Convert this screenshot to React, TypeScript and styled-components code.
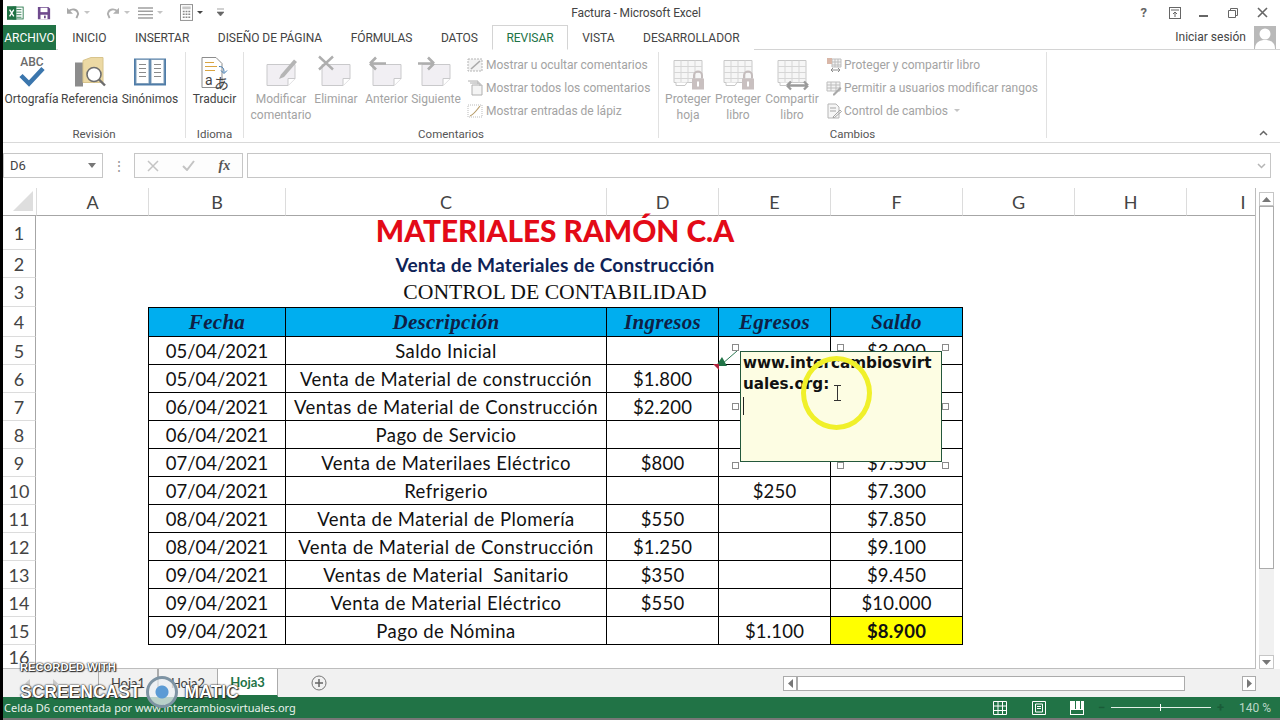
import React from 'react';
import styled, { createGlobalStyle } from 'styled-components';

const GlobalStyle = createGlobalStyle`
  html, body { margin: 0; padding: 0; background: #fff; }
  * { box-sizing: border-box; }
`;

const UI_FONT = `Roboto, "Noto Sans", sans-serif`;
const CELL_FONT = `Lato, "Open Sans", sans-serif`;

const COLUMNS = [
  { name: 'A', width: 112 },
  { name: 'B', width: 137 },
  { name: 'C', width: 321 },
  { name: 'D', width: 112 },
  { name: 'E', width: 112 },
  { name: 'F', width: 132 },
  { name: 'G', width: 112 },
  { name: 'H', width: 112 },
  { name: 'I', width: 113 },
];

// las celdas tapadas por el comentario quedan vacias
const TABLE_ROWS = [
  ['05/04/2021', 'Saldo Inicial', '', '', '$3.000'],
  ['05/04/2021', 'Venta de Material de construcción', '$1.800', '', ''],
  ['06/04/2021', 'Ventas de Material de Construcción', '$2.200', '', ''],
  ['06/04/2021', 'Pago de Servicio', '', '', ''],
  ['07/04/2021', 'Venta de Materilaes Eléctrico', '$800', '', '$7.550'],
  ['07/04/2021', 'Refrigerio', '', '$250', '$7.300'],
  ['08/04/2021', 'Venta de Material de Plomería', '$550', '', '$7.850'],
  ['08/04/2021', 'Venta de Material de Construcción', '$1.250', '', '$9.100'],
  ['09/04/2021', 'Ventas de Material  Sanitario', '$350', '', '$9.450'],
  ['09/04/2021', 'Venta de Material Eléctrico', '$550', '', '$10.000'],
  ['09/04/2021', 'Pago de Nómina', '', '$1.100', '$8.900'],
];

const HANDLES = [
  [735, 347], [840, 347], [945, 347],
  [735, 406], [945, 406],
  [735, 465], [840, 465], [945, 465],
];

// iconos de la cinta
function NoteIcon({ children }: { children?: React.ReactNode }) {
  return (
    <svg width="40" height="36" viewBox="0 0 40 36">
      <path d="M6 10h28v14l-7 7H6z" fill="#f1eff3" stroke="#c9c9cb" />
      <path d="M27 31v-7h7" fill="#fff" stroke="#c9c9cb" />
      {children}
    </svg>
  );
}

function SheetIcon({ lock, share }: { lock?: boolean; share?: boolean }) {
  return (
    <svg width="36" height="36" viewBox="0 0 36 36">
      <path d="M4 6h28v22H4z" fill="#f6f6f6" stroke="#c8c8c8" />
      <path d="M4 12h28M4 18h28M4 24h28M11 6v22M18 6v22M25 6v22" stroke="#d6d6d6" />
      <path d="M6 28v3h9l2-3" fill="#fff" stroke="#c8c8c8" />
      {lock && (
        <g>
          <path d="M24 24v-3a4 4 0 0 1 8 0v3" fill="none" stroke="#c4bcbc" strokeWidth="2" />
          <rect x="22" y="24" width="12" height="11" fill="#c9c0c0" />
          <rect x="27" y="27" width="2" height="5" fill="#fff" />
        </g>
      )}
      {share && <path d="M13 31h21M13 31l4-4M13 31l4 4M34 31l-4-4M34 31l-4 4" stroke="#9a9a9a" strokeWidth="2.4" fill="none" />}
    </svg>
  );
}

function SmallIcon({ kind }: { kind: string }) {
  return (
    <svg width="16" height="16" viewBox="0 0 16 16">
      {kind === 'dash' && <path d="M1 2h14v12H1z" fill="#f2f2f2" stroke="#b5b5b5" strokeDasharray="2 1" />}
      {kind === 'dash' && <path d="M4 12L13 4" stroke="#aaa" strokeWidth="1.6" />}
      {kind === 'stack' && <path d="M1 1h10v3M3 3h10v3M5 5h10v10H5z" fill="#f4f4f4" stroke="#b0b0b0" />}
      {kind === 'pencil' && <path d="M1 2h14v12H1z" fill="none" stroke="#bbb" strokeDasharray="1 1" />}
      {kind === 'pencil' && <path d="M3 13C6 12 10 7 13 3" stroke="#b79c6a" strokeWidth="1.2" fill="none" />}
      {kind === 'shareLock' && <path d="M6 2h9v8H6zM6 5h9M6 8h9M9 2v8M12 2v8" fill="#f4f4f4" stroke="#bdbdbd" />}
      {kind === 'shareLock' && <rect x="1" y="1" width="5" height="6" fill="#d9b7a8" />}
      {kind === 'shareLock' && <path d="M5 13h9M5 13l2-2M5 13l2 2M14 13l-2-2M14 13l-2 2" stroke="#8c8c8c" fill="none" />}
      {kind === 'range' && <path d="M1 2h13v9H1zM1 5h13M1 8h13M5 2v9M10 2v9" fill="#f4f4f4" stroke="#bdbdbd" />}
      {kind === 'range' && <path d="M7 14l7-7 1.5 1.5-7 7H7z" fill="#a9a9a9" />}
      {kind === 'track' && <path d="M2 1h8l3 3v11H2z" fill="#f6f6f6" stroke="#b5b5b5" />}
      {kind === 'track' && <path d="M4 5h6M4 8h6M7 14l7-7 1.5 1.5-7 6H7z" stroke="#a5a5a5" fill="none" />}
    </svg>
  );
}

export default function App() {
  return (
    <Page>
      <GlobalStyle />

      <TitleBar>
        <QuickAccess>
          <BarIcon $gap={0}>
            <svg width="17" height="16" viewBox="0 0 20 18">
              <rect x="7" y="2" width="12" height="14" fill="#fff" stroke="#1f7244" />
              <path d="M11 5h6M11 8h6M11 11h6M11 14h6" stroke="#1f7244" />
              <rect x="0" y="1" width="11" height="16" fill="#1f7244" />
              <path d="M3 5l5 8M8 5l-5 8" stroke="#fff" strokeWidth="1.6" />
            </svg>
          </BarIcon>
          <BarIcon $gap={13}>
            <svg width="14" height="14" viewBox="0 0 16 16">
              <path d="M1 1h12l2 2v12H1z" fill="#6f4a8e" />
              <rect x="4" y="2" width="8" height="5" fill="#fff" />
              <rect x="4" y="10" width="8" height="5" fill="#fff" />
              <rect x="8" y="11" width="2" height="3" fill="#6f4a8e" />
            </svg>
          </BarIcon>
          <BarIcon $gap={15}>
            <svg width="14" height="12" viewBox="0 0 16 14">
              <path d="M2 6c4-5 11-4 12 2l-2 5" fill="none" stroke="#a8a8a8" strokeWidth="2.2" />
              <path d="M1 1v7h7z" fill="#a8a8a8" />
            </svg>
          </BarIcon>
          <Caret $light />
          <BarIcon $gap={16}>
            <svg width="14" height="12" viewBox="0 0 16 14">
              <path d="M14 6C10 1 3 2 2 8l2 5" fill="none" stroke="#b0b0b0" strokeWidth="2.2" />
              <path d="M15 1v7H8z" fill="#b0b0b0" />
            </svg>
          </BarIcon>
          <Caret $light />
          <BarIcon $gap={8}>
            <svg width="15" height="12" viewBox="0 0 15 12">
              <path d="M0 1h15M0 4.300h15M0 7.600h15M0 11h15" stroke="#a0a0a0" strokeWidth="1.4" />
            </svg>
          </BarIcon>
          <Caret $light />
          <BarIcon $gap={17}>
            <svg width="13" height="17" viewBox="0 0 14 18">
              <rect x="0.5" y="0.5" width="13" height="17" fill="#fff" stroke="#8a8a8a" />
              <rect x="2.5" y="2.5" width="9" height="3" fill="#c6c6c6" />
              <path d="M3 8h2M6 8h2M9 8h2M3 11h2M6 11h2M9 11h2M3 14h2M6 14h2M9 14h2" stroke="#8a8a8a" strokeWidth="1.6" />
            </svg>
          </BarIcon>
          <Caret />
          <BarIcon $gap={14}>
            <svg width="7" height="9" viewBox="0 0 7 9">
              <path d="M0 1h7M0 4h7l-3.500 4z" fill="#666" stroke="#666" strokeWidth="0.6" />
            </svg>
          </BarIcon>
        </QuickAccess>
        <WindowTitle>Factura - Microsoft Excel</WindowTitle>
        <WindowControls>
          <HelpMark>?</HelpMark>
          <BarIcon $gap={22}>
            <svg width="12" height="12" viewBox="0 0 12 12">
              <rect x="0.5" y="0.5" width="11" height="11" fill="none" stroke="#666" />
              <path d="M2 3h8M6 10V5M4 7l2-2 2 2" fill="none" stroke="#666" />
            </svg>
          </BarIcon>
          <BarIcon $gap={18}>
            <svg width="10" height="10" viewBox="0 0 10 10">
              <rect x="0" y="7" width="9" height="2" fill="#666" />
            </svg>
          </BarIcon>
          <BarIcon $gap={19}>
            <svg width="10" height="10" viewBox="0 0 10 10">
              <path d="M2.500 2.500V.5h7v7h-2M.5 2.500h7v7h-7z" fill="none" stroke="#666" />
            </svg>
          </BarIcon>
          <BarIcon $gap={19}>
            <svg width="11" height="11" viewBox="0 0 11 11">
              <path d="M1 1l9 9M10 1l-9 9" stroke="#666" strokeWidth="1.6" />
            </svg>
          </BarIcon>
        </WindowControls>
      </TitleBar>

      <TabBar>
        <FileTab>ARCHIVO</FileTab>
        <Tab>INICIO</Tab>
        <Tab>INSERTAR</Tab>
        <Tab>DISEÑO DE PÁGINA</Tab>
        <Tab>FÓRMULAS</Tab>
        <Tab>DATOS</Tab>
        <Tab $active>REVISAR</Tab>
        <Tab>VISTA</Tab>
        <Tab>DESARROLLADOR</Tab>
        <SignIn>Iniciar sesión</SignIn>
        <Avatar>
          <svg width="22" height="23" viewBox="0 0 22 23">
            <rect width="22" height="23" fill="#b9b9b9" />
            <circle cx="11" cy="8" r="5.5" fill="#fff" />
            <path d="M1 23c0-7 5-9 10-9s10 2 10 9z" fill="#fff" />
          </svg>
        </Avatar>
      </TabBar>

      <Ribbon>
        <RibbonGroup $width={183}>
          <GroupBody>
            <LargeButton $width={57}>
              <svg width="36" height="36" viewBox="0 0 36 36">
                <text x="18" y="11" textAnchor="middle" fontFamily="Roboto, sans-serif" fontSize="12" fontWeight="500" fill="#6a6a6a">ABC</text>
                <path d="M7 21l8 8L29 14" fill="none" stroke="#3b76ad" strokeWidth="4.5" />
              </svg>
              Ortografía
            </LargeButton>
            <LargeButton $width={59}>
              <svg width="36" height="36" viewBox="0 0 36 36">
                <rect x="3" y="8" width="8" height="24" fill="#8c8c8c" />
                <path d="M11 6l8-3h12v25H11z" fill="#ecd9a4" stroke="#d8c48c" />
                <circle cx="22" cy="20" r="7" fill="#fff" stroke="#6d6d6d" strokeWidth="1.6" />
                <path d="M27 25l6 6" stroke="#6d6d6d" strokeWidth="2.4" />
              </svg>
              Referencia
            </LargeButton>
            <LargeButton $width={62}>
              <svg width="36" height="36" viewBox="0 0 36 36">
                <path d="M2 4h32v27H2z" fill="#4f7ca8" />
                <path d="M4 5h13v24H4zM19 5h13v24H19z" fill="#fff" stroke="#7f9db9" />
                <path d="M7 10h7M7 14h7M7 18h7M7 22h7M22 10h7M22 14h7M22 18h7M22 22h7" stroke="#8a8a8a" />
              </svg>
              Sinónimos
            </LargeButton>
          </GroupBody>
          <GroupLabel>Revisión</GroupLabel>
        </RibbonGroup>

        <RibbonGroup $width={58}>
          <GroupBody>
            <LargeButton $width={57}>
              <svg width="36" height="36" viewBox="0 0 36 36">
                <path d="M5 3h14l6 6v24H5z" fill="#fff" stroke="#8d8d8d" />
                <path d="M8 8h9M8 12h12M8 16h10" stroke="#d9a441" />
                <text x="8" y="30" fontFamily="Roboto, sans-serif" fontSize="14" fill="#444">a</text>
                <text x="17" y="34" fontFamily="'Noto Sans CJK JP', sans-serif" fontSize="15" fill="#444">あ</text>
                <path d="M22 12c4 0 5 2 5 6M24 16l3 3 3-3" fill="none" stroke="#3b76ad" />
              </svg>
              Traducir
            </LargeButton>
          </GroupBody>
          <GroupLabel>Idioma</GroupLabel>
        </RibbonGroup>

        <RibbonGroup $width={415}>
          <GroupBody $inset={9}>
            <LargeButton $width={56} $disabled>
              <NoteIcon>
                <path d="M20 20l13-15 3 2.500-13 15-5 2z" fill="#b5b5b5" />
              </NoteIcon>
              <span>Modificar<br />comentario</span>
            </LargeButton>
            <LargeButton $width={54} $disabled>
              <NoteIcon>
                <path d="M3 2l14 13M17 2L3 15" stroke="#aeaeae" strokeWidth="2.4" />
              </NoteIcon>
              Eliminar
            </LargeButton>
            <LargeButton $width={47} $disabled>
              <NoteIcon>
                <path d="M3 9h16M3 9l6-6M3 9l6 6" fill="none" stroke="#aeaeae" strokeWidth="2.6" />
              </NoteIcon>
              Anterior
            </LargeButton>
            <LargeButton $width={52} $disabled>
              <NoteIcon>
                <path d="M2 9h16M18 9l-6-6M18 9l-6 6" fill="none" stroke="#aeaeae" strokeWidth="2.6" />
              </NoteIcon>
              Siguiente
            </LargeButton>
            <SmallColumn>
              <SmallRow $left={5}><SmallIcon kind="dash" />Mostrar u ocultar comentarios</SmallRow>
              <SmallRow $left={5}><SmallIcon kind="stack" />Mostrar todos los comentarios</SmallRow>
              <SmallRow $left={5}><SmallIcon kind="pencil" />Mostrar entradas de lápiz</SmallRow>
            </SmallColumn>
          </GroupBody>
          <GroupLabel>Comentarios</GroupLabel>
        </RibbonGroup>

        <RibbonGroup $width={388}>
          <GroupBody $inset={4}>
            <LargeButton $width={50} $disabled>
              <SheetIcon lock />
              <span>Proteger<br />hoja</span>
            </LargeButton>
            <LargeButton $width={50} $disabled>
              <SheetIcon lock />
              <span>Proteger<br />libro</span>
            </LargeButton>
            <LargeButton $width={58} $disabled>
              <SheetIcon share />
              <span>Compartir<br />libro</span>
            </LargeButton>
            <SmallColumn>
              <SmallRow $left={5} $tight><SmallIcon kind="shareLock" />Proteger y compartir libro</SmallRow>
              <SmallRow $left={5} $tight><SmallIcon kind="range" />Permitir a usuarios modificar rangos</SmallRow>
              <SmallRow $left={5} $tight><SmallIcon kind="track" />Control de cambios<Caret $light /></SmallRow>
            </SmallColumn>
          </GroupBody>
          <GroupLabel>Cambios</GroupLabel>
        </RibbonGroup>

        <Collapse>
          <svg width="9" height="6" viewBox="0 0 9 6">
            <path d="M1 5l3.500-3.500L8 5" fill="none" stroke="#666" strokeWidth="1.5" />
          </svg>
        </Collapse>
      </Ribbon>

      <FormulaBar>
        <NameBox>
          D6
          <svg width="8" height="5" viewBox="0 0 8 5"><path d="M0 0h8L4 5z" fill="#777" /></svg>
        </NameBox>
        <Dots>⋮</Dots>
        <FormulaButtons>
          <svg width="12" height="12" viewBox="0 0 12 12"><path d="M1 1l10 10M11 1L1 11" stroke="#c4c4c4" strokeWidth="1.500" /></svg>
          <svg width="13" height="11" viewBox="0 0 13 11"><path d="M1 6l4 4 7-9" fill="none" stroke="#c4c4c4" strokeWidth="2" /></svg>
          <Fx>fx</Fx>
        </FormulaButtons>
        <FormulaInput>
          <svg width="9" height="6" viewBox="0 0 9 6"><path d="M1 1l3.500 3.500L8 1" fill="none" stroke="#b5b5b5" strokeWidth="1.500" /></svg>
        </FormulaInput>
      </FormulaBar>

      <Workspace>
        <Sheet>
          <Corner>
            <svg width="20" height="20" viewBox="0 0 20 20"><path d="M20 0v20H0z" fill="#dedede" /></svg>
          </Corner>
          {COLUMNS.map((column) => (
            <ColumnHeader key={column.name}>{column.name}</ColumnHeader>
          ))}

          <RowNumber>1</RowNumber>
          <TitleCell>MATERIALES RAMÓN C.A</TitleCell>
          <RowNumber>2</RowNumber>
          <SubtitleCell>Venta de Materiales de Construcción</SubtitleCell>
          <RowNumber>3</RowNumber>
          <ControlCell>CONTROL DE CONTABILIDAD</ControlCell>

          <RowNumber>4</RowNumber>
          {['Fecha', 'Descripción', 'Ingresos', 'Egresos', 'Saldo'].map((label, i) => (
            <HeadCell key={label} $first={i === 0} $last={i === 4}>{label}</HeadCell>
          ))}

          {TABLE_ROWS.map((row, r) => (
            <React.Fragment key={r}>
              <RowNumber>{r + 5}</RowNumber>
              {row.map((value, c) => (
                <DataCell
                  key={c}
                  $first={c === 0}
                  $last={c === 4}
                  $spacing={c === 1 ? 0.45 : c === 0 ? 0 : 0.2}
                  $total={r === TABLE_ROWS.length - 1 && c === 4}
                >
                  {value}
                </DataCell>
              ))}
            </React.Fragment>
          ))}

          <RowNumber>16</RowNumber>
        </Sheet>
        <VerticalScroll>
          <ScrollButton>
            <svg width="9" height="5" viewBox="0 0 9 5"><path d="M4.500 0L9 5H0z" fill="#777" /></svg>
          </ScrollButton>
          <VerticalThumb />
          <ScrollButton>
            <svg width="9" height="5" viewBox="0 0 9 5"><path d="M0 0h9L4.500 5z" fill="#777" /></svg>
          </ScrollButton>
        </VerticalScroll>
      </Workspace>

      <SheetTabs>
        <TabNav>
          <svg width="5" height="9" viewBox="0 0 5 9"><path d="M5 0v9L0 4.500z" fill="#c9c9c9" /></svg>
          <svg width="5" height="9" viewBox="0 0 5 9"><path d="M0 0v9l5-4.500z" fill="#c9c9c9" /></svg>
        </TabNav>
        <SheetTab>Hoja1</SheetTab>
        <SheetTab>Hoja2</SheetTab>
        <SheetTab $active>Hoja3</SheetTab>
        <AddSheet>
          <svg width="16" height="16" viewBox="0 0 16 16">
            <circle cx="8" cy="8" r="7" fill="none" stroke="#777" />
            <path d="M8 4v8M4 8h8" stroke="#666" strokeWidth="1.500" />
          </svg>
        </AddSheet>
        <HorizontalScroll>
          <ArrowButton>
            <svg width="5" height="9" viewBox="0 0 5 9"><path d="M5 0v9L0 4.500z" fill="#777" /></svg>
          </ArrowButton>
          <HorizontalThumb />
          <ArrowButton>
            <svg width="5" height="9" viewBox="0 0 5 9"><path d="M0 0v9l5-4.500z" fill="#777" /></svg>
          </ArrowButton>
        </HorizontalScroll>
      </SheetTabs>

      <StatusBar>
        <StatusText>Celda D6 comentada por www.intercambiosvirtuales.org</StatusText>
        <ViewIcons>
          <svg width="14" height="14" viewBox="0 0 14 14">
            <path d="M.5.5h13v13H.5zM.5 5h13M.5 9.500h13M5 .5v13M9.500.5v13" fill="none" stroke="#fff" />
          </svg>
          <svg width="14" height="14" viewBox="0 0 14 14">
            <path d="M.5.5h13v13H.5z" fill="none" stroke="#fff" />
            <path d="M3.500 3h7v8h-7zM5 5.500h4M5 7.500h4" fill="none" stroke="#fff" />
          </svg>
          <svg width="14" height="14" viewBox="0 0 14 14">
            <path d="M0 0h14v14H0z" fill="#fff" />
            <path d="M5 0h1v8H5zM10 0h1v8h-1z" fill="#217346" />
            <path d="M1 9h12v4H1z" fill="#217346" />
          </svg>
        </ViewIcons>
        <ZoomControl>
          <ZoomSign>−</ZoomSign>
          <ZoomTrack><ZoomTick /></ZoomTrack>
          <ZoomSign>+</ZoomSign>
        </ZoomControl>
        <ZoomValue>140 %</ZoomValue>
      </StatusBar>
      <BottomEdge />

      {/* comentario sobre la celda D6 */}
      <CommentArrow width="30" height="24" viewBox="0 0 30 24">
        <path d="M21 0L6 13" stroke="#2c7a54" />
        <path d="M6 6l5 9H0z" fill="#217346" />
      </CommentArrow>
      <CommentFlag />
      <CommentBox>
        www.intercambiosvirt<br />uales.org:
        <TextCaret />
      </CommentBox>
      {HANDLES.map(([x, y]) => (
        <Handle key={`${x}-${y}`} style={{ left: x - 3, top: y - 3 }} />
      ))}
      <CursorHalo />
      <IBeam width="7" height="16" viewBox="0 0 7 16">
        <path d="M0 .5h7M0 15.500h7M3.500 .5v15" stroke="#333" fill="none" />
      </IBeam>

      <Watermark>
        <RecordedWith>RECORDED WITH</RecordedWith>
        <BrandLine>
          SCREENCAST
          <BrandDot />
          MATIC
        </BrandLine>
      </Watermark>
    </Page>
  );
}

const Page = styled.div`
  position: relative;
  width: 1280px;
  height: 720px;
  overflow: hidden;
  display: flex;
  flex-direction: column;
  background: #fff;
  border-left: 3px solid #000;
  font-family: ${UI_FONT};
  color: #444;
`;

const TitleBar = styled.div`
  height: 25px;
  display: flex;
  align-items: center;
  position: relative;
  background: #fff;
`;

const QuickAccess = styled.div`
  display: flex;
  align-items: center;
  padding-left: 4px;
`;

const BarIcon = styled.span<{ $gap: number }>`
  display: inline-flex;
  margin-left: ${({ $gap }) => $gap}px;
`;

const Caret = styled.span<{ $light?: boolean }>`
  display: inline-block;
  margin-left: 4px;
  border-left: 3px solid transparent;
  border-right: 3px solid transparent;
  border-top: 3px solid ${({ $light }) => ($light ? '#c4c4c4' : '#444')};
`;

const WindowTitle = styled.div`
  position: absolute;
  left: 533px;
  width: 200px;
  text-align: center;
  font-size: 12px;
  letter-spacing: -0.1px;
  color: #444;
`;

const WindowControls = styled.div`
  margin-left: auto;
  padding-right: 12px;
  display: flex;
  align-items: center;
`;

const HelpMark = styled.span`
  font-size: 13px;
  font-weight: 700;
  color: #666;
`;

const TabBar = styled.div`
  height: 25px;
  display: flex;
  align-items: stretch;
  border-bottom: 1px solid #d4d4d4;
`;

const FileTab = styled.div`
  width: 53px;
  height: 25px;
  margin-right: 2px;
  background: #217346;
  color: #fff;
  font-size: 12px;
  display: flex;
  align-items: center;
  justify-content: center;
`;

const Tab = styled.div<{ $active?: boolean }>`
  height: 25px;
  padding: 0 13.3px;
  display: flex;
  align-items: center;
  font-size: 12px;
  letter-spacing: -0.05px;
  color: ${({ $active }) => ($active ? '#217346' : '#444')};
  background: #fff;
  border: 1px solid ${({ $active }) => ($active ? '#d4d4d4' : 'transparent')};
  border-bottom: ${({ $active }) => ($active ? '1px solid #fff' : '0')};
`;

const SignIn = styled.div`
  margin-left: auto;
  align-self: center;
  font-size: 12px;
  color: #444;
  padding-right: 8px;
`;

const Avatar = styled.div`
  width: 26px;
  padding-top: 1px;
`;

const Ribbon = styled.div`
  height: 93px;
  display: flex;
  border-bottom: 1px solid #d9d9d9;
  position: relative;
`;

const RibbonGroup = styled.div<{ $width: number }>`
  width: ${({ $width }) => $width}px;
  height: 86px;
  flex-shrink: 0;
  margin-top: 2px;
  border-right: 1px solid #e1e1e1;
`;

const GroupBody = styled.div<{ $inset?: number }>`
  height: 74px;
  display: flex;
  align-items: flex-start;
  padding-left: ${({ $inset }) => $inset ?? 0}px;
`;

const GroupLabel = styled.div`
  height: 16px;
  text-align: center;
  font-size: 11.5px;
  line-height: 16px;
  color: #555;
`;

const LargeButton = styled.div<{ $width: number; $disabled?: boolean }>`
  width: ${({ $width }) => $width}px;
  flex-shrink: 0;
  display: flex;
  flex-direction: column;
  align-items: center;
  text-align: center;
  white-space: nowrap;
  padding-top: 2px;
  font-size: 12px;
  line-height: 16px;
  color: ${({ $disabled }) => ($disabled ? '#a3a3a3' : '#444')};

  svg {
    height: 37px;
  }
`;

const SmallColumn = styled.div`
  display: flex;
  flex-direction: column;
  padding-top: 1px;
`;

const SmallRow = styled.div<{ $left: number; $tight?: boolean }>`
  height: 23px;
  display: flex;
  align-items: center;
  gap: ${({ $tight }) => ($tight ? 2 : 3)}px;
  padding-left: ${({ $left }) => $left}px;
  font-size: 12px;
  white-space: nowrap;
  color: #a3a3a3;
`;

const Collapse = styled.div`
  position: absolute;
  right: 12px;
  bottom: 6px;
  line-height: 0;
`;

const FormulaBar = styled.div`
  height: 25px;
  margin-top: 10px;
  padding-right: 9px;
  display: flex;
  align-items: stretch;
`;

const NameBox = styled.div`
  width: 100px;
  border: 1px solid #c6c6c6;
  padding: 0 6px;
  display: flex;
  align-items: center;
  justify-content: space-between;
  font-family: ${UI_FONT};
  font-size: 13px;
  color: #444;
`;

const Dots = styled.div`
  width: 31px;
  display: flex;
  align-items: center;
  justify-content: center;
  color: #999;
  font-size: 14px;
`;

const FormulaButtons = styled.div`
  width: 109px;
  border: 1px solid #c6c6c6;
  display: flex;
  align-items: center;
  justify-content: space-around;
  background: #fdfdfd;
`;

const Fx = styled.span`
  font-family: "Liberation Serif", serif;
  font-style: italic;
  font-weight: 700;
  font-size: 14px;
  color: #555;
`;

const FormulaInput = styled.div`
  flex: 1;
  margin-left: 4px;
  border: 1px solid #c6c6c6;
  display: flex;
  align-items: center;
  justify-content: flex-end;
  padding-right: 4px;
`;

const Workspace = styled.div`
  height: 481px;
  margin-top: 10px;
  display: flex;
`;

const Sheet = styled.div`
  width: 1253px;
  height: 481px;
  flex-shrink: 0;
  overflow: hidden;
  display: grid;
  grid-template-columns: 33px ${COLUMNS.map((c) => `${c.width}px`).join(' ')};
  grid-template-rows: 28px 34px 28px 29px 30px repeat(11, 28px) 24px;
  border-right: 1px solid #bdbdbd;
  border-bottom: 1px solid #bdbdbd;
`;

const Corner = styled.div`
  display: flex;
  align-items: flex-end;
  justify-content: flex-end;
  padding: 0 3px 4px 0;
  border-bottom: 1px solid #a6a6a6;
`;

const ColumnHeader = styled.div`
  display: flex;
  align-items: center;
  justify-content: center;
  font-family: ${CELL_FONT};
  font-size: 18px;
  color: #444;
  border-bottom: 1px solid #a6a6a6;
  border-left: 1px solid #dcdcdc;
`;

const RowNumber = styled.div`
  grid-column: 1;
  display: flex;
  align-items: center;
  justify-content: center;
  font-family: ${CELL_FONT};
  font-size: 18px;
  color: #444;
  border-bottom: 1px solid #dcdcdc;
  border-right: 1px solid #a6a6a6;
`;

const TitleCell = styled.div`
  grid-column: 3 / 8;
  display: flex;
  align-items: center;
  justify-content: center;
  padding-bottom: 6px;
  font-family: ${CELL_FONT};
  font-size: 29.8px;
  font-weight: 900;
  color: #e30a17;
`;

const SubtitleCell = styled(TitleCell)`
  padding-bottom: 0;
  font-size: 19.1px;
  font-weight: 700;
  letter-spacing: 0.2px;
  color: #0f2357;
`;

const ControlCell = styled(TitleCell)`
  padding-bottom: 0;
  font-family: "Liberation Serif", serif;
  font-size: 21.7px;
  font-weight: 400;
  color: #111;
`;

const TableCell = styled.div<{ $first?: boolean; $last?: boolean }>`
  grid-column: ${({ $first }) => ($first ? '3' : 'auto')};
  display: flex;
  align-items: center;
  justify-content: center;
  white-space: pre;
  border-left: 1px solid #000;
  border-bottom: 1px solid #000;
  box-shadow: ${({ $last }) => ($last ? '1px 0 0 #000' : 'none')};
`;

const HeadCell = styled(TableCell)`
  background: #00aeef;
  border-top: 1px solid #000;
  font-family: "Liberation Serif", serif;
  font-style: italic;
  font-weight: 700;
  font-size: 21px;
  letter-spacing: 0.3px;
  color: #0f1f45;
`;

const DataCell = styled(TableCell)<{ $total?: boolean; $spacing: number }>`
  font-family: ${CELL_FONT};
  font-size: 18.5px;
  letter-spacing: ${({ $spacing }) => $spacing}px;
  color: #111;
  font-weight: ${({ $total }) => ($total ? 700 : 400)};
  background: ${({ $total }) => ($total ? '#ffff00' : '#fff')};
`;

const VerticalScroll = styled.div`
  width: 15px;
  margin: 4px 0 0 3px;
  display: flex;
  flex-direction: column;
  background: #f1f1f1;
`;

const ScrollButton = styled.div`
  height: 14px;
  flex-shrink: 0;
  background: #fff;
  border: 1px solid #c6c6c6;
  display: flex;
  align-items: center;
  justify-content: center;
`;

const VerticalThumb = styled.div`
  height: 363px;
  background: #fff;
  border: 1px solid #ababab;
  margin-bottom: auto;
`;

const SheetTabs = styled.div`
  height: 28px;
  display: flex;
  align-items: stretch;
  padding-right: 24px;
  background: #f1f1f1;
`;

const TabNav = styled.div`
  width: 95px;
  padding-left: 22px;
  display: flex;
  align-items: center;
  gap: 23px;
`;

const SheetTab = styled.div<{ $active?: boolean }>`
  width: 60px;
  display: flex;
  align-items: center;
  justify-content: center;
  font-size: 13px;
  font-family: ${CELL_FONT};
  color: ${({ $active }) => ($active ? '#217346' : '#444')};
  font-weight: ${({ $active }) => ($active ? 700 : 400)};
  background: ${({ $active }) => ($active ? '#fff' : 'transparent')};
  border-right: 1px solid #ababab;
  border-left: ${({ $active }) => ($active ? '0' : '1px solid #ababab')};
  border-bottom: ${({ $active }) => ($active ? '2px solid #217346' : '0')};
`;

const AddSheet = styled.div`
  margin-left: 33px;
  display: flex;
  align-items: center;
`;

const HorizontalScroll = styled.div`
  margin-left: auto;
  width: 473px;
  align-self: center;
  height: 15px;
  display: flex;
`;

const ArrowButton = styled.div`
  width: 14px;
  flex-shrink: 0;
  background: #fff;
  border: 1px solid #ababab;
  display: flex;
  align-items: center;
  justify-content: center;
`;

const HorizontalThumb = styled.div`
  width: 388px;
  background: #fff;
  border: 1px solid #ababab;
  margin-right: auto;
`;

const StatusBar = styled.div`
  height: 21px;
  background: #217346;
  display: flex;
  align-items: center;
  color: #fff;
`;

const StatusText = styled.div`
  padding-left: 1px;
  font-family: "Noto Sans", sans-serif;
  font-size: 11px;
  color: #e8f2ec;
`;

const ViewIcons = styled.div`
  margin-left: auto;
  width: 91px;
  display: flex;
  justify-content: space-between;
`;

const ZoomControl = styled.div`
  width: 126px;
  margin-left: 14px;
  display: flex;
  align-items: center;
  justify-content: space-between;
`;

const ZoomSign = styled.span`
  font-size: 13px;
  font-weight: 700;
  color: #1a5c38;
`;

const ZoomTrack = styled.div`
  width: 100px;
  height: 1px;
  background: #e3efe8;
  position: relative;
`;

const ZoomTick = styled.div`
  position: absolute;
  left: 49px;
  top: -3px;
  width: 1px;
  height: 7px;
  background: #fff;
`;

const ZoomValue = styled.div`
  width: 36px;
  margin-left: 15px;
  margin-right: 5px;
  font-size: 12px;
  white-space: nowrap;
  color: #bcd7c8;
`;

const BottomEdge = styled.div`
  height: 2px;
  background: #777;
`;

const CommentArrow = styled.svg`
  position: absolute;
  left: 713px;
  top: 351px;
`;

const CommentFlag = styled.div`
  position: absolute;
  left: 710px;
  top: 364px;
  border-left: 6px solid transparent;
  border-top: 6px solid #b0223c;
`;

const CommentBox = styled.div`
  position: absolute;
  left: 737px;
  top: 351px;
  width: 202px;
  height: 111px;
  padding: 1px 2px;
  background: #fdfde3;
  border: 1px solid #24583c;
  font-family: "DejaVu Sans", sans-serif;
  font-weight: 700;
  font-size: 15.2px;
  line-height: 21px;
  white-space: nowrap;
  color: #111;
`;

const TextCaret = styled.div`
  width: 1px;
  height: 18px;
  margin-top: 2px;
  background: #222;
`;

const Handle = styled.div`
  position: absolute;
  width: 7px;
  height: 7px;
  margin-left: -3px;
  background: #fff;
  border: 1px solid #8a8a8a;
`;

const CursorHalo = styled.div`
  position: absolute;
  left: 798px;
  top: 356px;
  width: 71px;
  height: 74px;
  border-radius: 50%;
  border: 5px solid #f0f02a;
  filter: blur(0.7px);
`;

const IBeam = styled.svg`
  position: absolute;
  left: 831px;
  top: 385px;
`;

const Watermark = styled.div`
  position: absolute;
  left: 17px;
  top: 660px;
  color: #fff;
  font-family: "Liberation Sans", sans-serif;
  font-weight: 700;
  text-shadow: 0 0 1px #111, 0 0 2px #111, 1px 1px 1px #333;
`;

const RecordedWith = styled.div`
  font-size: 11.200px;
  line-height: 15px;
`;

const BrandLine = styled.div`
  display: flex;
  align-items: center;
  font-size: 17.500px;
  line-height: 34px;
`;

const BrandDot = styled.span`
  width: 32px;
  height: 32px;
  margin: 0 7px 0 5px;
  border-radius: 50%;
  border: 3px solid #7d93a3;
  background: radial-gradient(circle, #5b9bd5 0 6px, rgba(235, 240, 244, 0.75) 7px);
`;
